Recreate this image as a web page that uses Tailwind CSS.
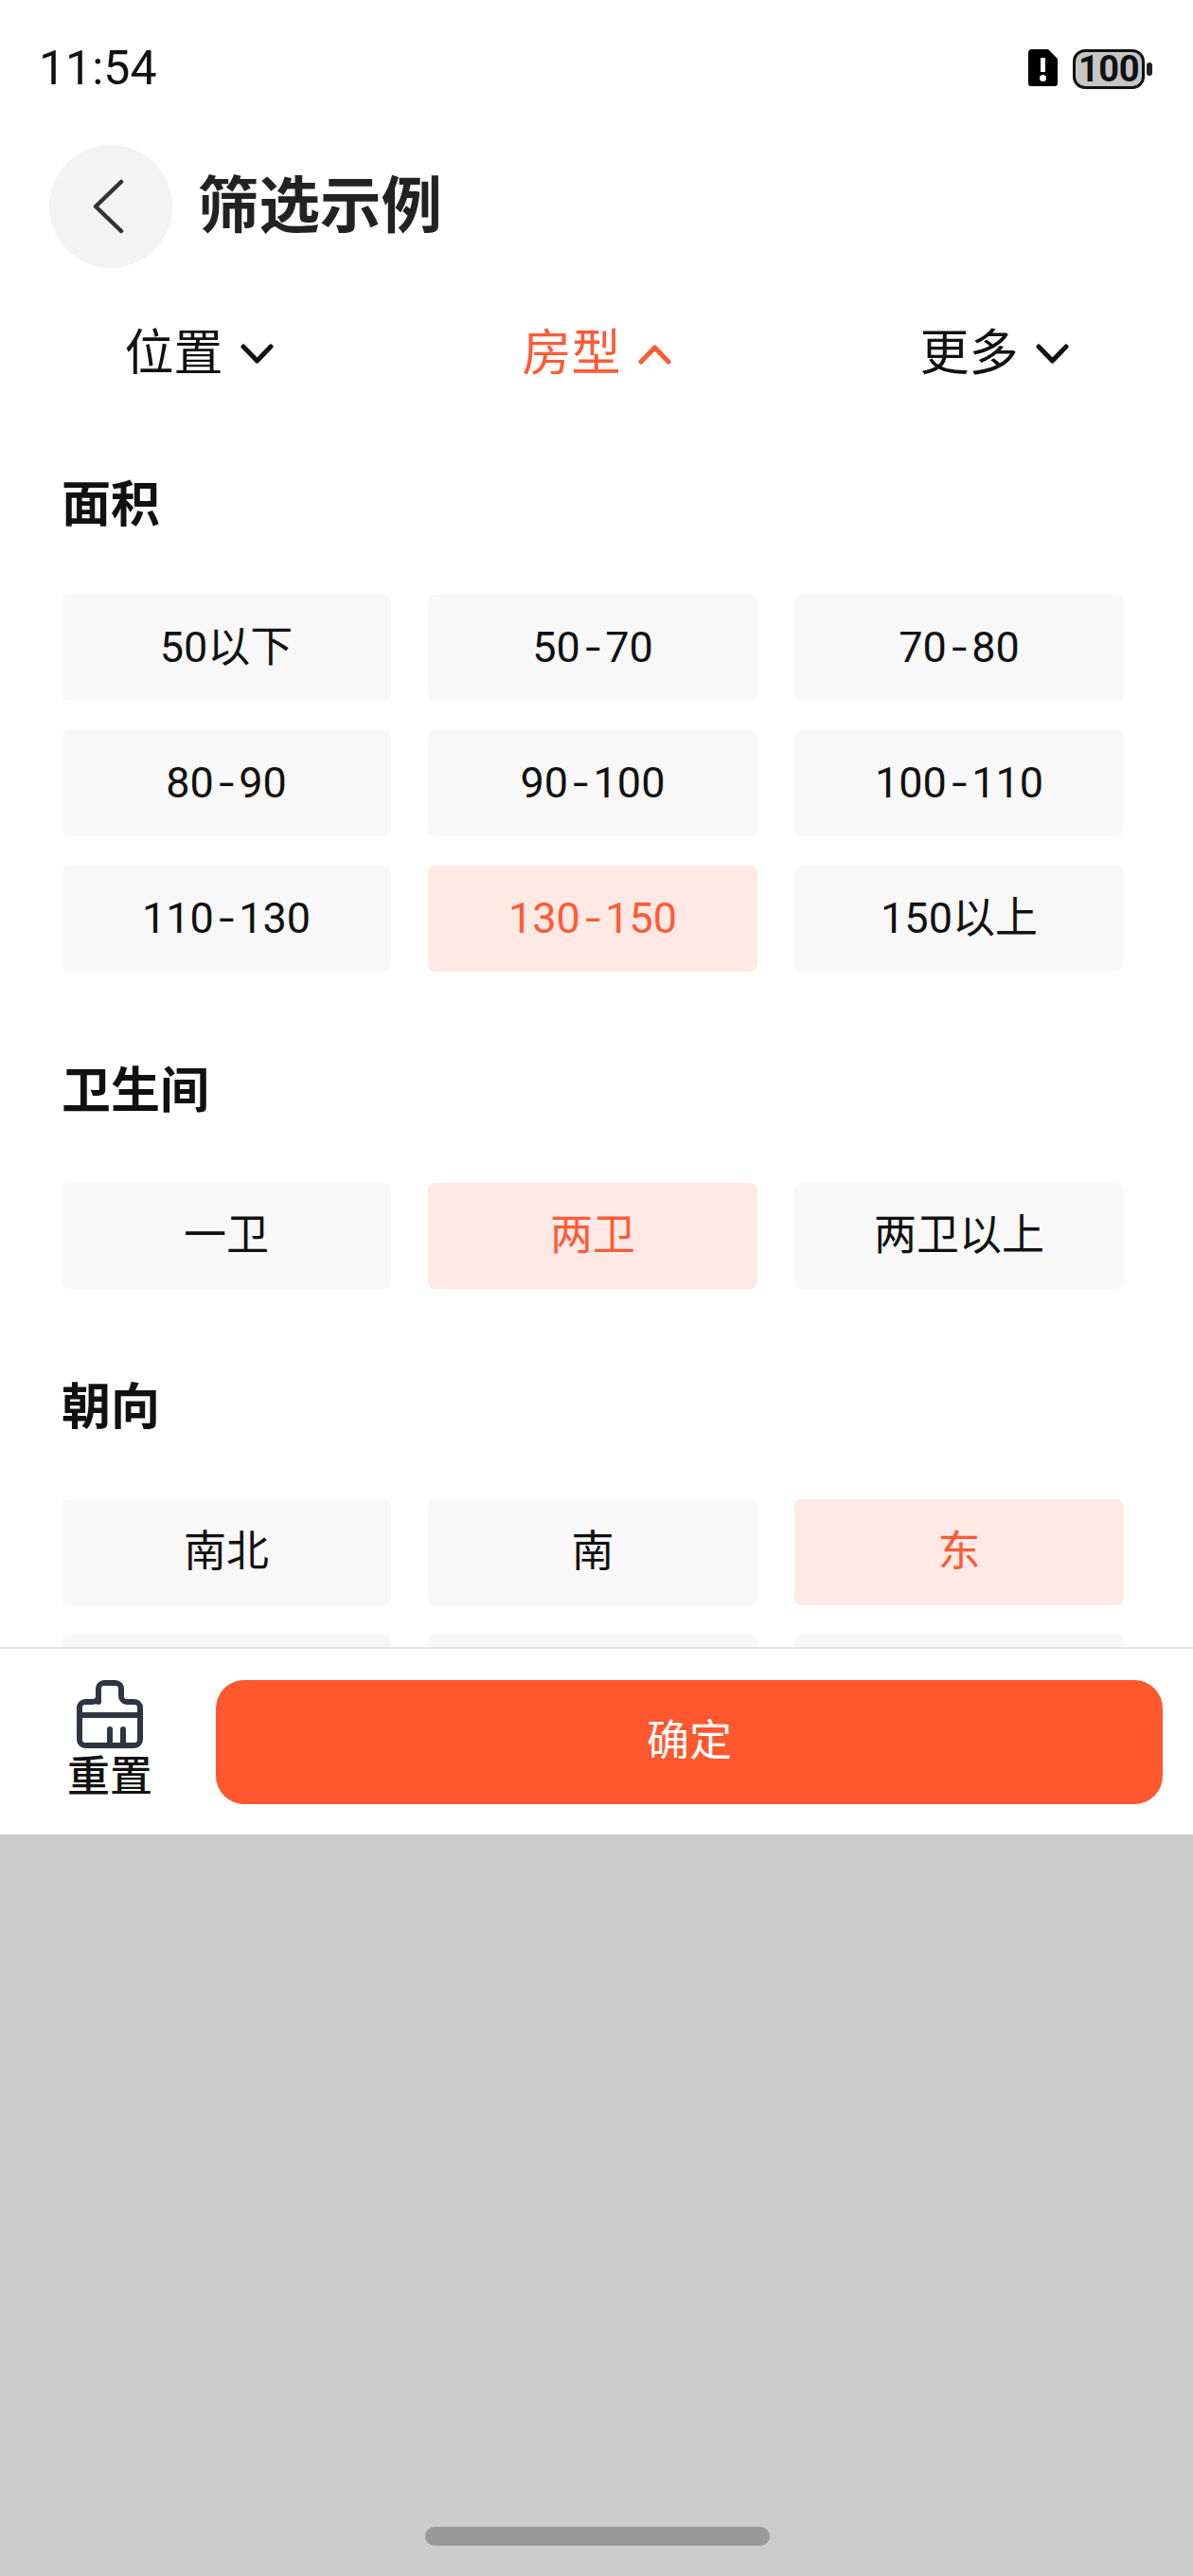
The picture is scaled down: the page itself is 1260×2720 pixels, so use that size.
<!DOCTYPE html>
<html lang="zh-CN">
<head>
  <meta charset="UTF-8">
  <meta name="viewport" content="width=device-width, initial-scale=1.0">
  <title>筛选示例</title>
  <script src="https://cdn.jsdelivr.net/npm/@tailwindcss/browser@4"></script>
</head>
<body class="relative w-[1260px] h-[2720px] overflow-hidden bg-[#cccccc] font-['Roboto','Noto_Sans_CJK_SC',sans-serif] text-[#111111]">
  <div class="flex flex-col h-[1937px] bg-white">
    <!-- 状态栏 -->
    <div class="flex justify-between h-[153px] pl-[41px] pr-[43px] pt-[44px] shrink-0">
      <span class="text-[50px] leading-[56px]">11:54</span>
      <div class="flex items-start gap-[16px] pt-[8px]">
        <svg class="w-[31px] h-[39px]" viewBox="0 0 31 39">
          <path fill="#000" fill-rule="evenodd" d="M4 0h17l10 10v26a3 3 0 0 1-3 3H3a3 3 0 0 1-3-3V4a4 4 0 0 1 4-4zM13 9v15h5V9zM15.500 27a3.500 3.500 0 1 0 0 7a3.500 3.500 0 0 0 0-7z"/>
        </svg>
        <div class="flex items-center gap-[2px]">
          <div class="flex items-center justify-center w-[76px] h-[42px] rounded-[13px] border-[3px] border-[#111111] bg-[#c6c6c6] text-[38px] leading-none font-bold tracking-[-0.5px]">100</div>
          <div class="w-[6px] h-[14px] rounded-full bg-[#222222]"></div>
        </div>
      </div>
    </div>

    <!-- 标题 -->
    <div class="flex items-center h-[130px] pl-[52px] shrink-0">
      <div class="flex items-center justify-center w-[130px] h-[130px] rounded-full bg-[#f3f3f3]">
        <svg class="w-[34px] h-[58px] mr-[6px]" viewBox="0 0 34 58" fill="none" stroke="#333333" stroke-width="4.500" stroke-linecap="round" stroke-linejoin="round">
          <path d="M31 3L4 29l27 26"/>
        </svg>
      </div>
      <h1 class="ml-[27px] text-[64.500px] leading-none font-bold text-[#222222]">筛选示例</h1>
    </div>

    <!-- 筛选标签 -->
    <div class="grid grid-cols-3 h-[176px] pt-[5px] shrink-0 text-[52px]">
      <div class="flex items-center justify-center gap-[18px]">
        <span>位置</span>
        <svg class="w-[35px] h-[22px]" viewBox="0 0 35 22" fill="none" stroke="#111111" stroke-width="5" stroke-linecap="round" stroke-linejoin="round"><path d="M3 3l14.500 15L32 3"/></svg>
      </div>
      <div class="flex items-center justify-center gap-[18px] text-[#ff5a36]">
        <span>房型</span>
        <svg class="w-[35px] h-[22px]" viewBox="0 0 35 22" fill="none" stroke="#ff5a36" stroke-width="5" stroke-linecap="round" stroke-linejoin="round"><path d="M3 19L17.500 4L32 19"/></svg>
      </div>
      <div class="flex items-center justify-center gap-[18px]">
        <span>更多</span>
        <svg class="w-[35px] h-[22px]" viewBox="0 0 35 22" fill="none" stroke="#111111" stroke-width="5" stroke-linecap="round" stroke-linejoin="round"><path d="M3 3l14.500 15L32 3"/></svg>
      </div>
    </div>

    <!-- 筛选内容 -->
    <div class="flex-1 min-h-0 overflow-hidden pl-[65px] pr-[73px] pt-[25px]">
      <section>
        <h2 class="flex items-center h-[100px] mb-[44px] text-[52px] font-bold">面积</h2>
        <div class="grid grid-cols-3 gap-x-[39px] gap-y-[31px] text-[45px]">
          <div class="flex items-center justify-center h-[112px] rounded-[8px] bg-[#f8f8f8]">50以下</div>
          <div class="flex items-center justify-center h-[112px] rounded-[8px] bg-[#f8f8f8]">50<span class="mx-[7px] scale-x-130">-</span>70</div>
          <div class="flex items-center justify-center h-[112px] rounded-[8px] bg-[#f8f8f8]">70<span class="mx-[7px] scale-x-130">-</span>80</div>
          <div class="flex items-center justify-center h-[112px] rounded-[8px] bg-[#f8f8f8]">80<span class="mx-[7px] scale-x-130">-</span>90</div>
          <div class="flex items-center justify-center h-[112px] rounded-[8px] bg-[#f8f8f8]">90<span class="mx-[7px] scale-x-130">-</span>100</div>
          <div class="flex items-center justify-center h-[112px] rounded-[8px] bg-[#f8f8f8]">100<span class="mx-[7px] scale-x-130">-</span>110</div>
          <div class="flex items-center justify-center h-[112px] rounded-[8px] bg-[#f8f8f8]">110<span class="mx-[7px] scale-x-130">-</span>130</div>
          <div class="flex items-center justify-center h-[112px] rounded-[8px] bg-[#ffe9e5] text-[#ff5a36]">130<span class="mx-[7px] scale-x-130">-</span>150</div>
          <div class="flex items-center justify-center h-[112px] rounded-[8px] bg-[#f8f8f8]">150以上</div>
        </div>
      </section>

      <section class="mt-[77px]">
        <h2 class="flex items-center h-[100px] mb-[46px] text-[52px] font-bold">卫生间</h2>
        <div class="grid grid-cols-3 gap-x-[39px] text-[45px]">
          <div class="flex items-center justify-center h-[112px] rounded-[8px] bg-[#f8f8f8]">一卫</div>
          <div class="flex items-center justify-center h-[112px] rounded-[8px] bg-[#ffe9e5] text-[#ff5a36]">两卫</div>
          <div class="flex items-center justify-center h-[112px] rounded-[8px] bg-[#f8f8f8]">两卫以上</div>
        </div>
      </section>

      <section class="mt-[76px]">
        <h2 class="flex items-center h-[100px] mb-[46px] text-[52px] font-bold">朝向</h2>
        <div class="grid grid-cols-3 gap-x-[39px] gap-y-[31px] text-[45px]">
          <div class="flex items-center justify-center h-[112px] rounded-[8px] bg-[#f8f8f8]">南北</div>
          <div class="flex items-center justify-center h-[112px] rounded-[8px] bg-[#f8f8f8]">南</div>
          <div class="flex items-center justify-center h-[112px] rounded-[8px] bg-[#ffe9e5] text-[#ff5a36]">东</div>
          <div class="h-[112px] rounded-[8px] bg-[#f8f8f8]"></div>
          <div class="h-[112px] rounded-[8px] bg-[#f8f8f8]"></div>
          <div class="h-[112px] rounded-[8px] bg-[#f8f8f8]"></div>
        </div>
      </section>
    </div>

    <!-- 底部操作栏 -->
    <div class="flex items-center h-[198px] shrink-0 border-t-2 border-[#e4e4e4] bg-white">
      <div class="flex flex-col items-center w-[232px] shrink-0 -mt-[3px]">
        <svg class="w-[70px] h-[73px]" viewBox="0 0 70 73" fill="none" stroke="#2f3541" stroke-width="6" stroke-linecap="round" stroke-linejoin="round">
          <path d="M23 23V9a6 6 0 0 1 6-6h12a6 6 0 0 1 6 6v8a6 6 0 0 0 6 6h8a6 6 0 0 1 6 6v34a6 6 0 0 1-6 6H9a6 6 0 0 1-6-6V29a6 6 0 0 1 6-6h8a6 6 0 0 0 6-6"/>
          <path d="M3 37h64"/>
          <path d="M35 52v17"/>
          <path d="M49 52v17"/>
        </svg>
        <span class="mt-[5px] text-[45px] leading-[50px] font-medium">重置</span>
      </div>
      <button class="flex items-center justify-center ml-[-4px] w-[1000px] h-[131px] rounded-[30px] bg-[#ff572e] text-white text-[45px]">确定</button>
    </div>
  </div>

  <!-- 系统手势条 -->
  <div class="absolute left-[449px] top-[2668px] w-[364px] h-[20px] rounded-full bg-[#999999]"></div>
</body>
</html>
